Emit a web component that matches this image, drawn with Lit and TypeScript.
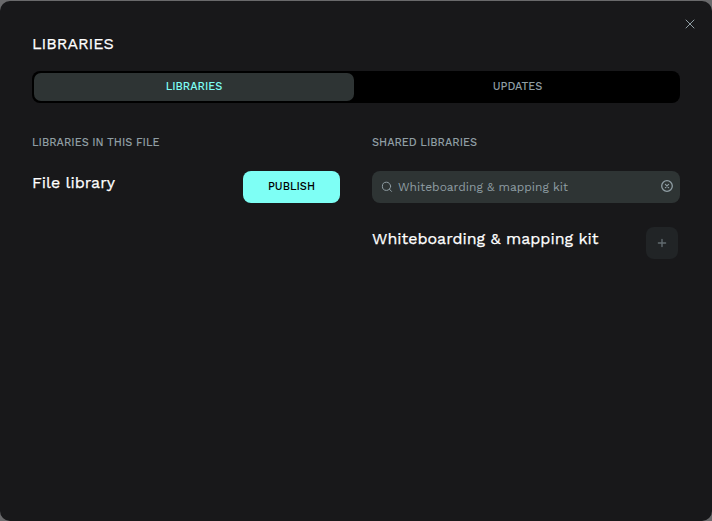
import { LitElement, html, css } from "lit";
import { customElement, state } from "lit/decorators.js";
import { classMap } from "lit/directives/class-map.js";

@customElement("app-root")
export class AppRoot extends LitElement {
  static styles = css`
    :host { display: block; height: 521px; background: #69696b; font-family: "Work Sans", Inter, sans-serif; overflow: hidden; padding-top: 1px; box-sizing: border-box; }
    * { box-sizing: border-box; }
    button { font: inherit; border: 0; padding: 0; margin: 0; background: none; color: inherit; }
    svg { display: block; fill: none; stroke: currentColor; stroke-linecap: round; stroke-linejoin: round; }
    .modal { position: relative; height: 520px; padding: 32px; border-radius: 10px; background: #18181a; color: #fff; }
    .close { position: absolute; top: 15px; right: 14px; width: 16px; height: 16px; color: #8f9da3; }
    .title { margin: 0; height: 22px; line-height: 22px; font-size: 16px; font-weight: 400; -webkit-text-stroke: 0.25px currentColor; }
    .tabs { display: flex; height: 32px; margin-top: 16px; padding: 2px; border-radius: 8px; background: #000; }
    .tab { flex: 1; border-radius: 7px; color: #8f9da3; font-size: 11px; font-weight: 500; line-height: 27px; padding: 0 0 1px 3px; }
    .tab.active { flex: 0 0 320px; padding-left: 0; background: #2e3434; color: #7efff5; }
    .columns { display: grid; grid-template-columns: 308px 308px; gap: 32px; margin-top: 32px; }
    .label { height: 16px; line-height: 16px; font-size: 11px; font-weight: 500; color: #8f9da3; }
    .row { display: flex; justify-content: space-between; margin-top: 20px; }
    .name { line-height: 24px; font-size: 16px; font-weight: 400; -webkit-text-stroke: 0.25px currentColor; white-space: nowrap; }
    .publish { width: 97px; height: 32px; padding-bottom: 1px; border-radius: 8px; background: #7efff5; color: #000; font-size: 11px; font-weight: 500; }
    .search { display: flex; align-items: center; height: 32px; margin-top: 20px; padding: 0 5px 0 9px; border-radius: 8px; background: #2e3434; color: #8f9da3; }
    .query { flex: 1; margin-left: 5px; font-size: 12px; line-height: 20px; white-space: nowrap; }
    .clear { margin-top: -2px; }
    .shared { margin-top: 24px; padding-right: 2px; }
    .add { display: grid; place-items: center; width: 32px; height: 32px; border-radius: 8px; background: #212426; color: #626b70; }
  `;

  @state() private tab = "LIBRARIES";

  render() {
    return html`
      <div class="modal">
        <button class="close" aria-label="Close">
          <svg width="16" height="16"><path d="M4 4l8 8M12 4l-8 8" /></svg>
        </button>
        <h2 class="title"><span>LIBRARIES</span></h2>
        <div class="tabs">
          ${["LIBRARIES", "UPDATES"].map(
            (name) => html`<button class=${classMap({ tab: true, active: this.tab === name })} @click=${() => (this.tab = name)}><span>${name}</span></button>`
          )}
        </div>
        <div class="columns">
          <section>
            <div class="label"><span>LIBRARIES IN THIS FILE</span></div>
            <div class="row">
              <div class="name">File library</div>
              <button class="publish"><span>PUBLISH</span></button>
            </div>
          </section>
          <section>
            <div class="label"><span>SHARED LIBRARIES</span></div>
            <div class="search">
              <svg width="12" height="12"><circle cx="5.5" cy="5.3" r="4.1" /><path d="M8.5 8.3l2 2.1" /></svg>
              <span class="query">Whiteboarding &amp; mapping kit</span>
              <svg class="clear" width="16" height="16"><circle cx="8" cy="8" r="5.3" stroke-width="1.3" /><path d="M6.4 6.4l3.2 3.2M9.6 6.4l-3.2 3.2" stroke-width="1.2" /></svg>
            </div>
            <div class="row shared">
              <div class="name">Whiteboarding &amp; mapping kit</div>
              <button class="add" aria-label="Add library">
                <svg width="16" height="16"><path d="M8 4.4v7.2M4.4 8h7.2" stroke-width="1.4" /></svg>
              </button>
            </div>
          </section>
        </div>
      </div>
    `;
  }
}
